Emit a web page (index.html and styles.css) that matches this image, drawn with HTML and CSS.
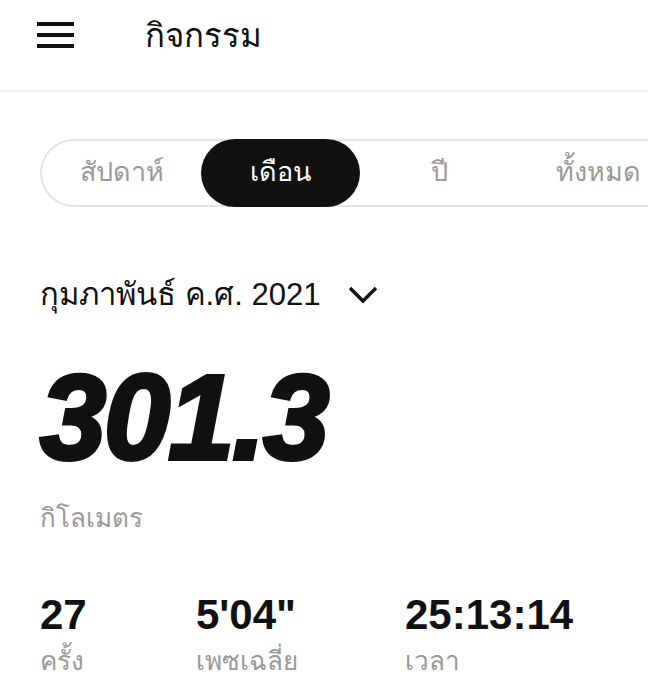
FILE: index.html
```html
<!DOCTYPE html>
<html lang="th">
<head>
    <meta charset="UTF-8">
    <meta name="viewport" content="width=device-width, initial-scale=1.0">
    <title>กิจกรรม</title>
    <link rel="stylesheet" href="styles.css">
</head>
<body>
    <header class="topbar">
        <div class="menu-icon">
            <span></span>
            <span></span>
            <span></span>
        </div>
        <h1>กิจกรรม</h1>
    </header>

    <div class="tabs-wrap">
        <div class="tabs">
            <div class="tab">สัปดาห์</div>
            <div class="tab active">เดือน</div>
            <div class="tab">ปี</div>
            <div class="tab">ทั้งหมด</div>
        </div>
    </div>

    <div class="period">
        <span>กุมภาพันธ์ ค.ศ. 2021</span>
        <svg class="chevron" viewBox="0 0 30 18" width="30" height="18">
            <path d="M2 2 L15 15 L28 2" fill="none" stroke="#111" stroke-width="3.4"/>
        </svg>
    </div>

    <div class="distance">301.3</div>
    <div class="unit">กิโลเมตร</div>

    <div class="stats">
        <div class="stat">
            <div class="value">27</div>
            <div class="label">ครั้ง</div>
        </div>
        <div class="stat">
            <div class="value">5'04"</div>
            <div class="label">เพซเฉลี่ย</div>
        </div>
        <div class="stat">
            <div class="value">25:13:14</div>
            <div class="label">เวลา</div>
        </div>
    </div>
</body>
</html>
```

FILE: styles.css
```css
body {
    font-family: "Noto Sans", "Liberation Sans", sans-serif;
    margin: 0;
    padding: 0;
    background: white;
    color: #111;
    overflow: hidden;
}

.topbar {
    height: 70px;
    padding: 0 0 20px 37px;
    display: flex;
    align-items: center;
    box-shadow: 0 1px 3px rgba(0, 0, 0, 0.12);
}

.menu-icon {
    width: 37px;
    display: flex;
    flex-direction: column;
    gap: 7px;
}

.menu-icon span {
    height: 4px;
    background: #111;
}

.topbar h1 {
    margin: 0 0 0 71px;
    font-size: 33px;
    font-weight: normal;
}

.tabs-wrap {
    overflow: hidden;
    padding: 49px 0 0 40px;
}

.tabs {
    height: 64px;
    width: 700px;
    border: 2px solid #e4e4e4;
    border-radius: 34px;
    display: flex;
    align-items: center;
}

.tab {
    width: 159px;
    text-align: center;
    font-size: 27px;
    color: #999;
    line-height: 64px;
    height: 68px;
}

.active {
    background: #111;
    color: white;
    border-radius: 34px;
}

.period {
    margin: 70px 0 0 40px;
    display: flex;
    align-items: center;
    gap: 28px;
    font-family: "Liberation Sans", "Noto Sans", sans-serif;
    font-size: 31px;
    line-height: 36px;
}

.distance {
    margin: 44px 0 0 40px;
    font-family: "Liberation Sans", sans-serif;
    font-weight: bold;
    font-style: italic;
    font-size: 120px;
    line-height: 120px;
    letter-spacing: -2px;
    -webkit-text-stroke: 4px #111;
    transform: scaleX(0.99);
    transform-origin: left;
}

.unit {
    margin: 20px 0 0 40px;
    font-size: 26px;
    color: #999;
}

.stats {
    margin: 53px 0 0 40px;
    display: flex;
}

.stat:nth-child(1) {
    width: 156px;
}

.stat:nth-child(2) {
    width: 209px;
}

.value {
    font-family: "Liberation Sans", sans-serif;
    font-weight: bold;
    font-size: 42px;
    line-height: 48px;
}

.label {
    margin-top: 3px;
    font-size: 26px;
    color: #999;
    line-height: 36px;
}
```
